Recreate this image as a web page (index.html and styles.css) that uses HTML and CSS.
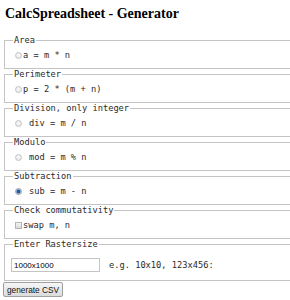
FILE: index.html
```html
<!DOCTYPE html>
<html>
<head>
<meta charset="utf-8">
<link rel="stylesheet" href="styles.css">
</head>
<body>
<h1 class="title">CalcSpreadsheet - Generator</h1>
<form class="form">
  <fieldset class="group">
    <legend class="legend">Area</legend>
    <label class="row"><input type="radio" name="op" class="radio">a = m * n</label>
  </fieldset>
  <fieldset class="group">
    <legend class="legend">Perimeter</legend>
    <label class="row"><input type="radio" name="op" class="radio">p = 2 * (m + n)</label>
  </fieldset>
  <fieldset class="group">
    <legend class="legend">Division, only integer</legend>
    <label class="row"><input type="radio" name="op" class="radio"><span class="sp">div = m / n</span></label>
  </fieldset>
  <fieldset class="group">
    <legend class="legend">Modulo</legend>
    <label class="row"><input type="radio" name="op" class="radio"><span class="sp">mod = m % n</span></label>
  </fieldset>
  <fieldset class="group">
    <legend class="legend">Subtraction</legend>
    <label class="row"><input type="radio" name="op" class="radio" checked><span class="sp">sub = m - n</span></label>
  </fieldset>
  <fieldset class="group">
    <legend class="legend">Check commutativity</legend>
    <label class="row"><input type="checkbox" class="check">swap m, n</label>
  </fieldset>
  <fieldset class="group raster">
    <legend class="legend">Enter Rastersize</legend>
    <div class="row"><input type="text" class="text" value="1000x1000"><span class="hint">e.g. 10x10, 123x456:</span></div>
  </fieldset>
  <button type="button" class="btn">generate CSV</button>
</form>
</body>
</html>
```
FILE: styles.css
```css
body {
  margin: 0;
  padding: 0 0 0 3px;
  font-family: "DejaVu Sans Mono", monospace;
  color: #2a2a2a;
  background: #fff;
}
.title {
  font-family: "Liberation Serif", serif;
  font-weight: bold;
  font-size: 14px;
  line-height: 16px;
  margin: 6px 0 13px 2px;
  color: #000;
}
.form { margin: 0; }
.group {
  margin: 0 0 0 1px;
  padding: 2px 8px 6px 9px;
  border: 1px solid #c4c4c4;
  border-right: none;
  min-width: 0;
}
.legend {
  padding: 0 1px;
  margin-left: -1px;
  font-size: 8.7px;
  line-height: 11px;
}
.row {
  display: flex;
  align-items: center;
  height: 14px;
  font-size: 8.7px;
  white-space: pre;
}
.sp { margin-left: 6px; }
.radio {
  -webkit-appearance: none;
  appearance: none;
  width: 7px;
  height: 7px;
  margin: 0 1px;
  border: 1px solid #c4c4c4;
  border-radius: 50%;
  background: radial-gradient(circle at 50% 40%, #fbfbfb, #e0e0e0);
  box-sizing: border-box;
}
.radio:checked {
  background: radial-gradient(circle, #1a5fa8 0 1.6px, #7aa8d6 2px, #e4e4e4 3px);
  border-color: #a0a0a0;
}
.check {
  -webkit-appearance: none;
  appearance: none;
  width: 7px;
  height: 7px;
  margin: 0 1px;
  border: 1px solid #b5b5b5;
  background: linear-gradient(#f4f4f4, #dadada);
  box-sizing: border-box;
}
.raster { padding-top: 8px; padding-bottom: 8px; }
.text {
  width: 89px;
  height: 14px;
  box-sizing: border-box;
  margin: 0 0 0 -3px;
  padding: 0 2px;
  border: 1px solid #c4c4c4;
  font-family: "Liberation Sans", sans-serif;
  font-size: 8px;
  color: #000;
}
.hint { margin-left: 9px; }
.btn {
  display: block;
  margin: 1px 0 0 0;
  width: 60px;
  height: 15px;
  padding: 0;
  border: 1px solid #a0a0a0;
  border-radius: 2px;
  background: linear-gradient(#f6f6f6, #dcdcdc);
  font-family: "Liberation Sans", sans-serif;
  font-size: 8.3px;
  color: #111;
}
```
